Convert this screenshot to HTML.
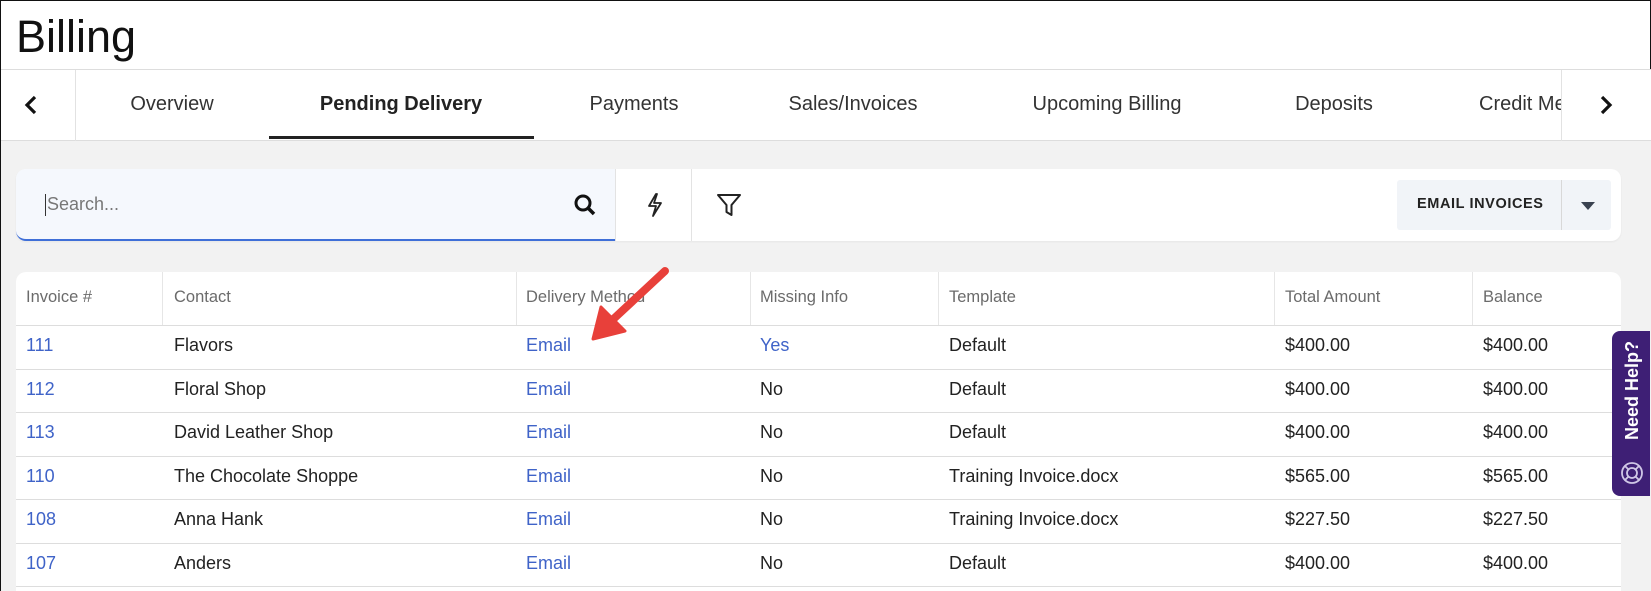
<!DOCTYPE html>
<html><head><meta charset="utf-8"><style>
*{margin:0;padding:0;box-sizing:border-box}
body{width:1651px;height:591px;overflow:hidden;background:#fff;font-family:"Liberation Sans",sans-serif;position:relative;border:1px solid #111}
.abs{position:absolute}
.title{left:15px;top:10px;font-size:45px;color:#111}
.tabs{left:0;top:68px;width:1651px;height:72px;border-top:1px solid #ddd;border-bottom:1px solid #ddd;background:#fff}
.tab{position:absolute;top:23px;font-size:20px;color:#333;transform:translateX(-50%);white-space:nowrap}
.gray{left:0;top:140px;width:1651px;height:450px;background:#f2f2f2}
.card{background:#fff;border-radius:10px}
.hd{position:absolute;top:16px;font-size:16.5px;color:#6b6b6b}
.row{position:absolute;left:0;width:1605px;height:44px;border-top:1px solid #ddd}
.c{position:absolute;top:9px;font-size:18px;color:#222}
.l{color:#3f63c8}
</style></head><body>
<div class="abs title">Billing</div>
<div class="abs tabs">
 <div class="abs" style="left:74px;top:0;width:1px;height:71px;background:#e2e2e2"></div>
 <div class="abs" style="left:1560px;top:0;width:1px;height:71px;background:#e2e2e2"></div>
 <svg class="abs" style="left:22px;top:24px" width="16" height="22" viewBox="0 0 16 22"><path d="M12 3L4 11l8 8" stroke="#111" stroke-width="3.2" fill="none"/></svg>
 <svg class="abs" style="left:1597px;top:24px" width="16" height="22" viewBox="0 0 16 22"><path d="M4 3l8 8-8 8" stroke="#111" stroke-width="3.2" fill="none"/></svg>
 <div class="tab" style="left:171px">Overview</div>
 <div class="tab" style="left:400px;font-weight:bold;color:#222">Pending Delivery</div>
 <div class="abs" style="left:268px;top:66px;width:265px;height:3px;background:#222"></div>
 <div class="tab" style="left:633px">Payments</div>
 <div class="tab" style="left:852px">Sales/Invoices</div>
 <div class="tab" style="left:1106px">Upcoming Billing</div>
 <div class="tab" style="left:1333px">Deposits</div>
 <div class="abs" style="left:1478px;top:23px;width:82px;overflow:hidden;font-size:20px;color:#333;white-space:nowrap">Credit Memos</div>
</div>
<div class="abs gray"></div>
<div class="abs card" style="left:15px;top:168px;width:1605px;height:72px;box-shadow:0 1px 2px rgba(0,0,0,.05)">
 <div class="abs" style="left:0;top:0;width:599px;height:72px;background:#f5f8fd;border-radius:10px 0 0 10px;border-bottom:2px solid #3f6fd8"></div>
 <div class="abs" style="left:29px;top:25px;width:1px;height:22px;background:#333"></div>
 <div class="abs" style="left:31px;top:25px;font-size:18px;color:#777">Search...</div>
 <svg class="abs" style="left:557px;top:24px" width="24" height="24" viewBox="0 0 24 24"><circle cx="10" cy="10" r="7" stroke="#111" stroke-width="3" fill="none"/><path d="M15 15l6 6" stroke="#111" stroke-width="3.5"/></svg>
 <div class="abs" style="left:599px;top:0;width:1px;height:72px;background:#e3e3e3"></div>
 <div class="abs" style="left:675px;top:0;width:1px;height:72px;background:#e3e3e3"></div>
 <svg class="abs" style="left:628px;top:23px" width="22" height="26" viewBox="0 0 22 26"><path d="M12 2L5 14h7l-3 10 8-13h-7l3-9z" stroke="#222" stroke-width="1.8" fill="none" stroke-linejoin="round"/></svg>
 <svg class="abs" style="left:700px;top:23px" width="26" height="26" viewBox="0 0 26 26"><path d="M2 3h22l-8.5 10v10l-5-3v-7z" stroke="#222" stroke-width="2" fill="none" stroke-linejoin="round"/></svg>
 <div class="abs" style="left:1381px;top:11px;width:214px;height:50px;background:#f1f4f8;border-radius:3px"></div>
 <div class="abs" style="left:1545px;top:11px;width:1px;height:50px;background:#d8d8d8"></div>
 <div class="abs" style="left:1401px;top:27px;font-size:14.5px;font-weight:bold;color:#222;letter-spacing:.6px">EMAIL INVOICES</div>
 <svg class="abs" style="left:1563px;top:32px" width="18" height="10"><path d="M2 1h14l-7 8z" fill="#3a4250"/></svg>
</div>
<div class="abs card" style="left:15px;top:271px;width:1605px;height:319px;overflow:hidden;border-radius:10px 10px 0 0">
 <div class="abs" style="left:146px;top:0;width:1px;height:53px;background:#e6e6e6"></div>
 <div class="abs" style="left:500px;top:0;width:1px;height:53px;background:#e6e6e6"></div>
 <div class="abs" style="left:734px;top:0;width:1px;height:53px;background:#e6e6e6"></div>
 <div class="abs" style="left:922px;top:0;width:1px;height:53px;background:#e6e6e6"></div>
 <div class="abs" style="left:1258px;top:0;width:1px;height:53px;background:#e6e6e6"></div>
 <div class="abs" style="left:1456px;top:0;width:1px;height:53px;background:#e6e6e6"></div>
 <div class="hd" style="left:10px">Invoice #</div>
 <div class="hd" style="left:158px">Contact</div>
 <div class="hd" style="left:510px">Delivery Method</div>
 <div class="hd" style="left:744px">Missing Info</div>
 <div class="hd" style="left:933px">Template</div>
 <div class="hd" style="left:1269px">Total Amount</div>
 <div class="hd" style="left:1467px">Balance</div>
 <div class="row" style="top:53px"><div class="c l" style="left:10px">111</div><div class="c" style="left:158px">Flavors</div><div class="c l" style="left:510px">Email</div><div class="c l" style="left:744px">Yes</div><div class="c" style="left:933px">Default</div><div class="c" style="left:1269px">$400.00</div><div class="c" style="left:1467px">$400.00</div></div>
 <div class="row" style="top:96.5px"><div class="c l" style="left:10px">112</div><div class="c" style="left:158px">Floral Shop</div><div class="c l" style="left:510px">Email</div><div class="c" style="left:744px">No</div><div class="c" style="left:933px">Default</div><div class="c" style="left:1269px">$400.00</div><div class="c" style="left:1467px">$400.00</div></div>
 <div class="row" style="top:140px"><div class="c l" style="left:10px">113</div><div class="c" style="left:158px">David Leather Shop</div><div class="c l" style="left:510px">Email</div><div class="c" style="left:744px">No</div><div class="c" style="left:933px">Default</div><div class="c" style="left:1269px">$400.00</div><div class="c" style="left:1467px">$400.00</div></div>
 <div class="row" style="top:183.5px"><div class="c l" style="left:10px">110</div><div class="c" style="left:158px">The Chocolate Shoppe</div><div class="c l" style="left:510px">Email</div><div class="c" style="left:744px">No</div><div class="c" style="left:933px">Training Invoice.docx</div><div class="c" style="left:1269px">$565.00</div><div class="c" style="left:1467px">$565.00</div></div>
 <div class="row" style="top:227px"><div class="c l" style="left:10px">108</div><div class="c" style="left:158px">Anna Hank</div><div class="c l" style="left:510px">Email</div><div class="c" style="left:744px">No</div><div class="c" style="left:933px">Training Invoice.docx</div><div class="c" style="left:1269px">$227.50</div><div class="c" style="left:1467px">$227.50</div></div>
 <div class="row" style="top:270.5px"><div class="c l" style="left:10px">107</div><div class="c" style="left:158px">Anders</div><div class="c l" style="left:510px">Email</div><div class="c" style="left:744px">No</div><div class="c" style="left:933px">Default</div><div class="c" style="left:1269px">$400.00</div><div class="c" style="left:1467px">$400.00</div></div>
 <div class="abs" style="left:0;top:314px;width:1605px;height:1px;background:#ddd"></div>
</div>
<svg class="abs" style="left:580px;top:260px" width="100" height="90" viewBox="0 0 100 90"><path d="M84 10L26 64" stroke="#e8403a" stroke-width="8" stroke-linecap="round"/><path d="M12 78L20 46 44 70z" fill="#e8403a" stroke="#e8403a" stroke-width="3" stroke-linejoin="round"/></svg>
<div class="abs" style="left:1611px;top:330px;width:38px;height:165px;background:#3e1f75;border-radius:8px 0 0 8px;overflow:hidden">
 <div class="abs" style="left:9px;top:10px;writing-mode:vertical-rl;transform:rotate(180deg);font-size:18px;font-weight:bold;color:#fff;white-space:nowrap;line-height:22px">Need Help?</div>
 <svg class="abs" style="left:8px;top:130px" width="24" height="24" viewBox="0 0 24 24" fill="none" stroke="#cfc6e6" stroke-width="1.8"><circle cx="12" cy="12" r="10"/><circle cx="12" cy="12" r="5"/><path d="M5 5l3.5 3.5M19 5l-3.5 3.5M5 19l3.5-3.5M19 19l-3.5-3.5"/></svg>
</div>
</body></html>
